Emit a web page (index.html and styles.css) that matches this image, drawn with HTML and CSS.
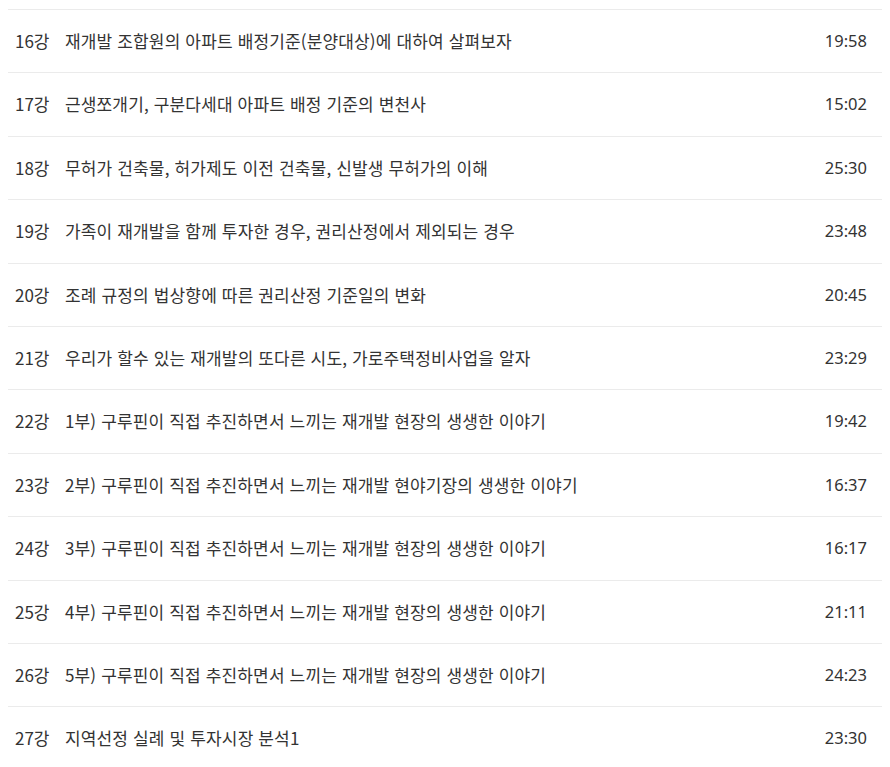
FILE: index.html
```html
<!DOCTYPE html>
<html lang="ko">
<head>
<meta charset="utf-8">
<link rel="stylesheet" href="styles.css">
</head>
<body>
<ul class="lecture-list">
  <li class="lecture"><span class="no">16강</span><span class="title">재개발 조합원의 아파트 배정기준(분양대상)에 대하여 살펴보자</span><span class="time">19:58</span></li>
  <li class="lecture"><span class="no">17강</span><span class="title">근생쪼개기, 구분다세대 아파트 배정 기준의 변천사</span><span class="time">15:02</span></li>
  <li class="lecture"><span class="no">18강</span><span class="title">무허가 건축물, 허가제도 이전 건축물, 신발생 무허가의 이해</span><span class="time">25:30</span></li>
  <li class="lecture"><span class="no">19강</span><span class="title">가족이 재개발을 함께 투자한 경우, 권리산정에서 제외되는 경우</span><span class="time">23:48</span></li>
  <li class="lecture"><span class="no">20강</span><span class="title">조례 규정의 법상향에 따른 권리산정 기준일의 변화</span><span class="time">20:45</span></li>
  <li class="lecture"><span class="no">21강</span><span class="title">우리가 할수 있는 재개발의 또다른 시도, 가로주택정비사업을 알자</span><span class="time">23:29</span></li>
  <li class="lecture"><span class="no">22강</span><span class="title">1부) 구루핀이 직접 추진하면서 느끼는 재개발 현장의 생생한 이야기</span><span class="time">19:42</span></li>
  <li class="lecture"><span class="no">23강</span><span class="title">2부) 구루핀이 직접 추진하면서 느끼는 재개발 현야기장의 생생한 이야기</span><span class="time">16:37</span></li>
  <li class="lecture"><span class="no">24강</span><span class="title">3부) 구루핀이 직접 추진하면서 느끼는 재개발 현장의 생생한 이야기</span><span class="time">16:17</span></li>
  <li class="lecture"><span class="no">25강</span><span class="title">4부) 구루핀이 직접 추진하면서 느끼는 재개발 현장의 생생한 이야기</span><span class="time">21:11</span></li>
  <li class="lecture"><span class="no">26강</span><span class="title">5부) 구루핀이 직접 추진하면서 느끼는 재개발 현장의 생생한 이야기</span><span class="time">24:23</span></li>
  <li class="lecture"><span class="no">27강</span><span class="title">지역선정 실례 및 투자시장 분석1</span><span class="time">23:30</span></li>
</ul>
</body>
</html>
```
FILE: styles.css
```css
html, body {
  margin: 0;
  padding: 0;
  background: #fff;
}
body {
  padding: 9px 8px 0;
  font-family: "Noto Sans CJK KR", "Noto Sans", sans-serif;
  font-size: 17px;
  color: #333;
}
.lecture-list {
  list-style: none;
  margin: 0;
  padding: 0;
}
.lecture {
  display: flex;
  align-items: center;
  border-top: 1px solid #ebebeb;
  padding: 20px 15px 20px 7px;
  line-height: 22.4px;
}
.no {
  flex: none;
  width: 50px;
}
.title {
  flex: 1;
  letter-spacing: 0.15px;
}
.time {
  flex: none;
  font-family: "Noto Sans", "Noto Sans CJK KR", sans-serif;
  font-size: 16.5px;
}
```
